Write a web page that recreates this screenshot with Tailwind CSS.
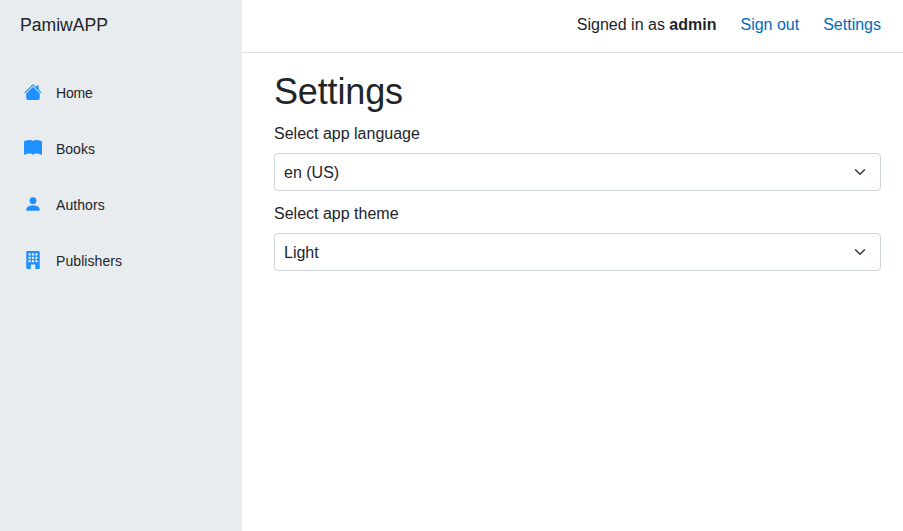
<!DOCTYPE html>
<html lang="en">
<head>
<meta charset="utf-8">
<title>PamiwAPP</title>
<script src="https://cdn.jsdelivr.net/npm/@tailwindcss/browser@4"></script>
</head>
<body class="flex h-screen overflow-hidden bg-white font-['Liberation_Sans',Arial,sans-serif] text-base text-[#212529]">
<aside class="w-[242px] shrink-0 bg-[#e8ecef]">
  <div class="flex h-[50px] items-center pl-5 text-[17.6px]">PamiwAPP</div>
  <nav class="flex flex-col gap-2 px-3 pt-[19px] text-sm">
    <a class="flex h-12 items-center gap-[14px] pl-3"><svg class="-mt-0.5 size-[18px] fill-[#1e90ff]" viewBox="0 0 16 16"><path d="M8.707 1.5a1 1 0 0 0-1.414 0L.646 8.146a.5.5 0 0 0 .708.708L8 2.207l6.646 6.647a.5.5 0 0 0 .708-.708L13 5.793V2.5a.5.5 0 0 0-.5-.5h-1a.5.5 0 0 0-.5.5v1.293z"/><path d="m8 3.293 6 6V13.5a1.5 1.5 0 0 1-1.5 1.5h-9A1.5 1.5 0 0 1 2 13.5V9.293z"/></svg><span class="tracking-[-0.2px]">Home</span></a>
    <a class="flex h-12 items-center gap-[14px] pl-3"><svg class="-mt-0.5 size-[18px] fill-[#1e90ff]" viewBox="0 0 16 16"><path d="M8 1.783C7.015.936 5.587.81 4.287.94c-1.514.153-3.042.672-3.994 1.105A.5.5 0 0 0 0 2.5v11a.5.5 0 0 0 .707.455c.882-.4 2.303-.881 3.68-1.02 1.409-.142 2.59.087 3.223.877a.5.5 0 0 0 .78 0c.633-.79 1.814-1.019 3.222-.877 1.378.139 2.8.62 3.681 1.02A.5.5 0 0 0 16 13.5v-11a.5.5 0 0 0-.293-.455c-.952-.433-2.48-.952-3.994-1.105C10.413.809 8.985.936 8 1.783"/></svg>Books</a>
    <a class="flex h-12 items-center gap-[14px] pl-3"><svg class="-mt-0.5 size-[18px] fill-[#1e90ff]" viewBox="0 0 16 16"><path d="M3 14s-1 0-1-1 1-4 6-4 6 3 6 4-1 1-1 1zm5-6a3 3 0 1 0 0-6 3 3 0 0 0 0 6"/></svg><span class="tracking-[0.08px]">Authors</span></a>
    <a class="flex h-12 items-center gap-[14px] pl-3"><svg class="-mt-0.5 size-[18px] fill-[#1e90ff]" viewBox="0 0 16 16"><path fill-rule="evenodd" d="M3 0a1 1 0 0 0-1 1v14a1 1 0 0 0 1 1h3v-3.500a.5.5 0 0 1 .5-.5h3a.5.5 0 0 1 .5.5V16h3a1 1 0 0 0 1-1V1a1 1 0 0 0-1-1zM4.500 2h1a.5.5 0 0 1 .5.5v1a.5.5 0 0 1-.5.5h-1a.5.5 0 0 1-.5-.5v-1a.5.5 0 0 1 .5-.5zM7.500 2h1a.5.5 0 0 1 .5.5v1a.5.5 0 0 1-.5.5h-1a.5.5 0 0 1-.5-.5v-1a.5.5 0 0 1 .5-.5zM10.500 2h1a.5.5 0 0 1 .5.5v1a.5.5 0 0 1-.5.5h-1a.5.5 0 0 1-.5-.5v-1a.5.5 0 0 1 .5-.5zM4.500 5h1a.5.5 0 0 1 .5.5v1a.5.5 0 0 1-.5.5h-1a.5.5 0 0 1-.5-.5v-1a.5.5 0 0 1 .5-.5zM7.500 5h1a.5.5 0 0 1 .5.5v1a.5.5 0 0 1-.5.5h-1a.5.5 0 0 1-.5-.5v-1a.5.5 0 0 1 .5-.5zM10.500 5h1a.5.5 0 0 1 .5.5v1a.5.5 0 0 1-.5.5h-1a.5.5 0 0 1-.5-.5v-1a.5.5 0 0 1 .5-.5zM4.500 8h1a.5.5 0 0 1 .5.5v1a.5.5 0 0 1-.5.5h-1a.5.5 0 0 1-.5-.5v-1a.5.5 0 0 1 .5-.5zM7.500 8h1a.5.5 0 0 1 .5.5v1a.5.5 0 0 1-.5.5h-1a.5.5 0 0 1-.5-.5v-1a.5.5 0 0 1 .5-.5zM10.500 8h1a.5.5 0 0 1 .5.5v1a.5.5 0 0 1-.5.5h-1a.5.5 0 0 1-.5-.5v-1a.5.5 0 0 1 .5-.5z"/></svg><span class="tracking-[0.08px]">Publishers</span></a>
  </nav>
</aside>
<main class="min-w-0 flex-1">
  <header class="flex h-[53px] items-center justify-end gap-6 border-b border-[#dee2e6] pr-[22px] pb-[3px]">
    <span>Signed in as <b>admin</b></span>
    <a class="text-[#006bb7]">Sign out</a>
    <a class="text-[#006bb7]">Settings</a>
  </header>
  <section class="pt-[17px] pr-[22px] pl-8">
    <h1 class="mb-[9px] text-[36px] leading-[43px] tracking-[-0.15px]">Settings</h1>
    <label class="block">Select app language</label>
    <div class="mt-[7px] flex h-[38px] items-center justify-between rounded border border-[#ced4da] pr-3 pl-[9px]"><span class="pt-0.5">en (US)</span><svg class="h-3 w-4" viewBox="0 0 16 16" fill="none" stroke="#343a40" stroke-width="2" stroke-linecap="round" stroke-linejoin="round"><path d="m2 5 6 6 6-6"/></svg></div>
    <label class="mt-[11px] block">Select app theme</label>
    <div class="mt-[7px] flex h-[38px] items-center justify-between rounded border border-[#ced4da] pr-3 pl-[9px]"><span class="pt-0.5">Light</span><svg class="h-3 w-4" viewBox="0 0 16 16" fill="none" stroke="#343a40" stroke-width="2" stroke-linecap="round" stroke-linejoin="round"><path d="m2 5 6 6 6-6"/></svg></div>
  </section>
</main>
</body>
</html>
